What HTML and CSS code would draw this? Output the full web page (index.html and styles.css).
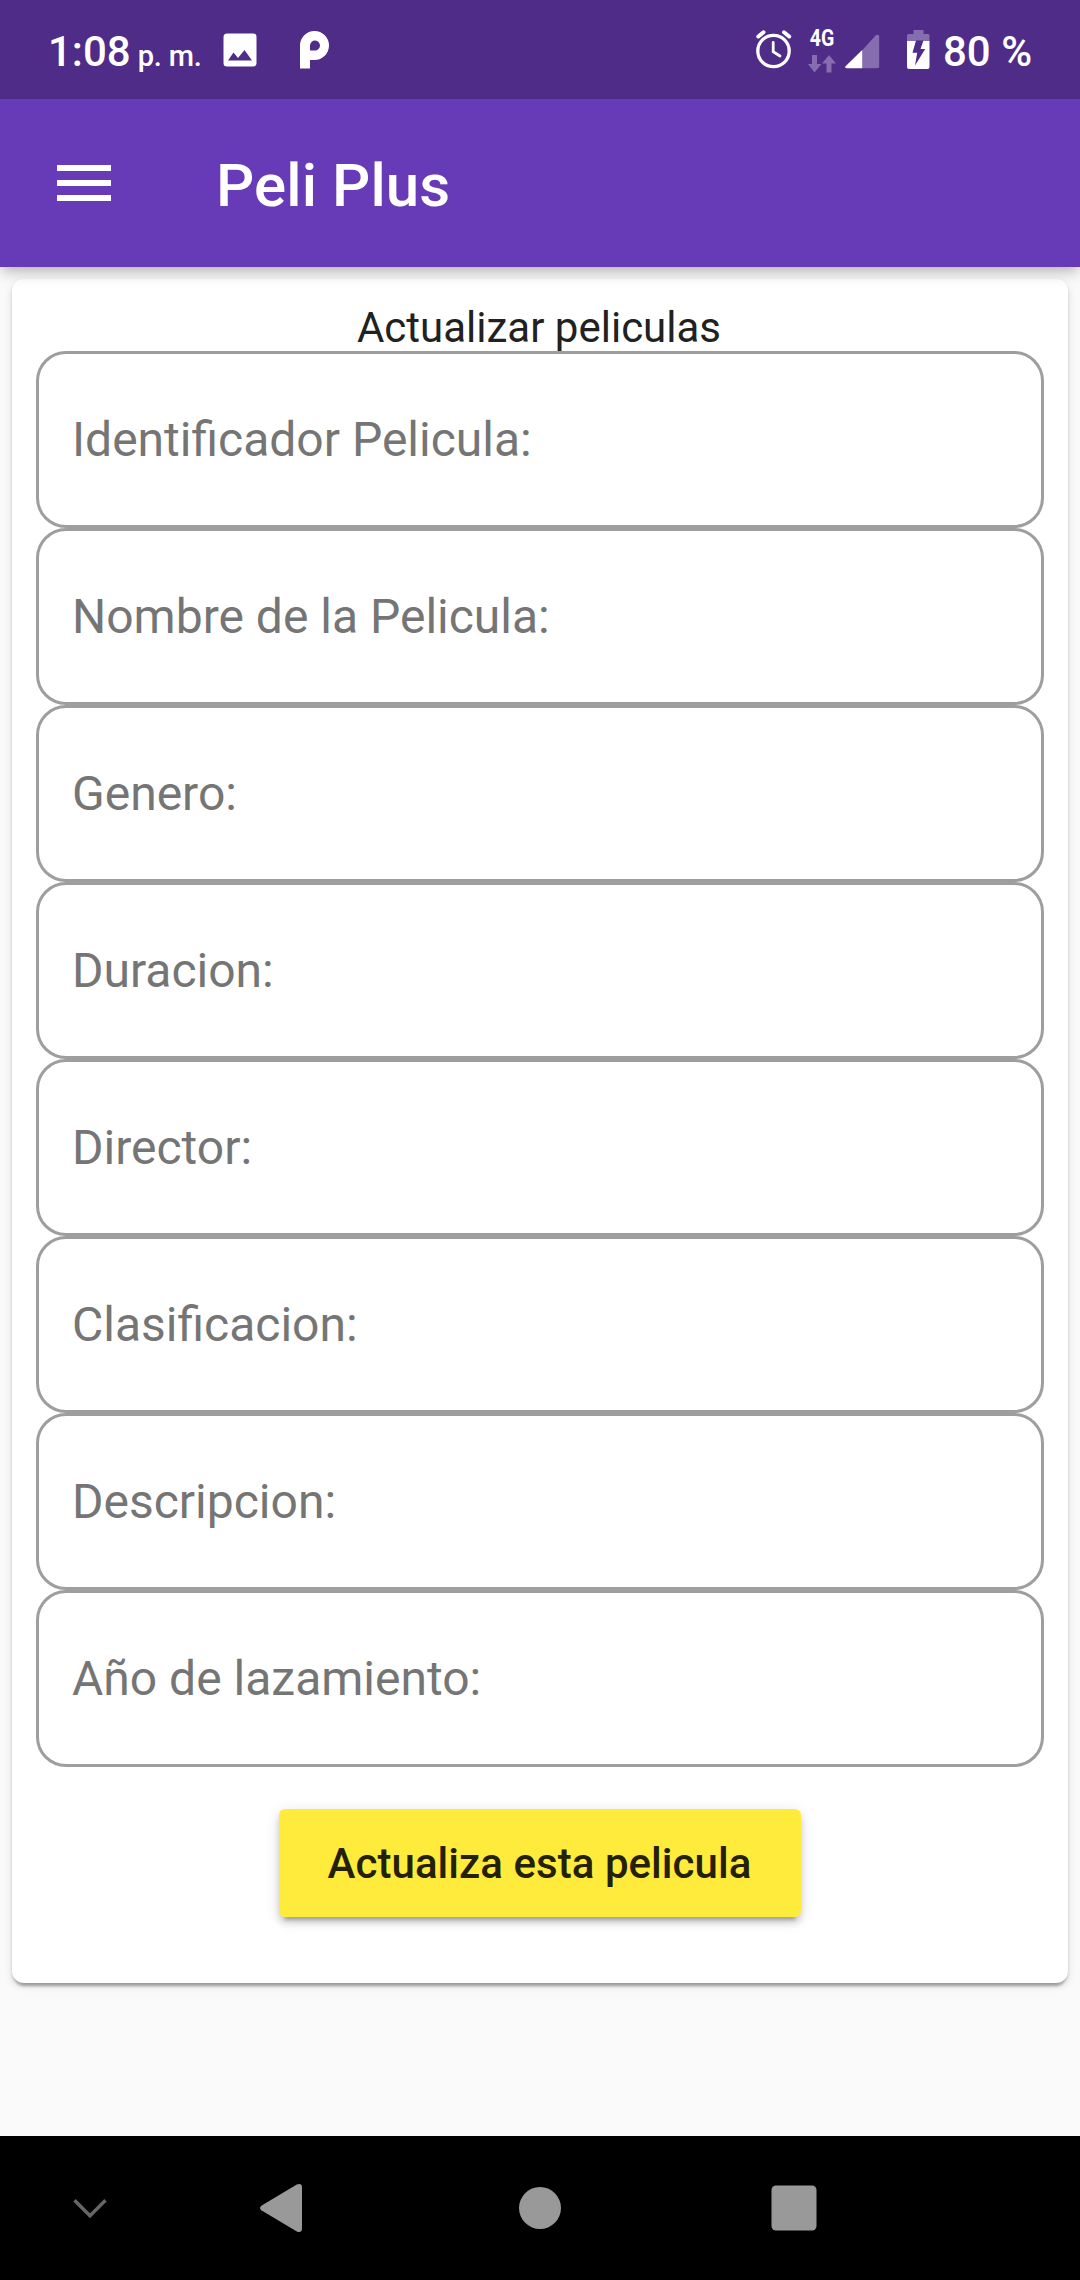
FILE: index.html
```html
<!DOCTYPE html>
<html lang="es">
<head>
<meta charset="utf-8">
<title>Peli Plus</title>
<link rel="stylesheet" href="styles.css">
</head>
<body>
<div class="screen">
  <div class="status-bar">
    <div class="status-group">
      <div class="clock"><span class="time">1:08</span><span class="meridiem">p. m.</span></div>
      <svg class="icon-picture" width="34" height="34" viewBox="0 0 34 34"><path fill="#fff" fill-rule="evenodd" d="M4 .5h26a3.500 3.500 0 0 1 3.500 3.500v26a3.500 3.500 0 0 1-3.500 3.500H4A3.500 3.500 0 0 1 .5 30V4A3.500 3.500 0 0 1 4 .5zM5 27.500h24L21.500 17l-6.500 8-4.500-5.500z"/></svg>
      <svg class="icon-p" width="30" height="38" viewBox="0 0 30 38"><path fill="#fff" fill-rule="evenodd" d="M0 37.500V14.500a14.500 14.500 0 1 1 14.500 14.500H10v8.500zM10 19.500h4.500a5 5 0 1 0-4.500-5z"/></svg>
    </div>
    <div class="status-group">
      <svg class="icon-alarm" width="38" height="40" viewBox="0 0 38 40"><g fill="none" stroke="#fff"><circle cx="18.500" cy="22" r="15.700" stroke-width="3.300"/><path stroke-width="2.800" stroke-linecap="round" d="M18.200 13.500v9.300l6.800 4.200"/><path stroke-width="4" stroke-linecap="round" d="M3.300 7.500 8.500 3.300M34.200 7.500 29 3.300"/></g></svg>
      <div class="network">
        <span class="network-type">4G</span>
        <svg width="28" height="18" viewBox="0 0 28 18"><path fill="#866daf" d="M4 0h5v9h4.500l-7 8.500L0 9h4zM18.500 17.500h5V8.500H28L21 0l-7 8.500h4.500z"/></svg>
      </div>
      <svg class="icon-signal" width="35" height="35" viewBox="0 0 35 35"><path fill="#866daf" d="M17 16.500 30.500 1.600C32 0 34.200.5 34.200 2.500V32.500q0 1.800-1.800 1.800H17z"/><path fill="#fff" d="M17.200 16v18.300H2Q-.5 34.300.5 32.300z"/></svg>
      <svg class="icon-battery" width="23" height="40" viewBox="0 0 23 40"><path fill="#866daf" d="M6.500 0h10v4H21q1.500 0 1.500 1.500V11H0V5.500Q0 4 1.500 4h5z"/><path fill="#fff" d="M0 11h22.500v26q0 2-2 2H2q-2 0-2-2z"/><path fill="#4e2c87" d="M9 10.500h7.500L13.500 19h4.700L8 35.500l2.200-12.800H5.500z"/></svg>
      <span class="battery-level">80 %</span>
    </div>
  </div>

  <header class="app-bar">
    <svg class="menu" width="54" height="36" viewBox="0 0 54 36"><path fill="#fff" d="M0 0h54v6H0zM0 15h54v6H0zM0 30h54v6H0z"/></svg>
    <h1 class="app-title">Peli Plus</h1>
  </header>

  <main class="content">
    <form class="card">
      <h2 class="card-title">Actualizar peliculas</h2>
      <label class="field">Identificador Pelicula:</label>
      <label class="field">Nombre de la Pelicula:</label>
      <label class="field">Genero:</label>
      <label class="field">Duracion:</label>
      <label class="field">Director:</label>
      <label class="field">Clasificacion:</label>
      <label class="field">Descripcion:</label>
      <label class="field">Año de lazamiento:</label>
      <button class="submit" type="button">Actualiza esta pelicula</button>
    </form>
  </main>

  <nav class="nav-bar">
    <svg class="nav-hide" width="34" height="22" viewBox="0 0 34 22"><path fill="none" stroke="#666" stroke-width="3.400" d="M1.500 3.200 17 18.800 32.500 3.200"/></svg>
    <svg class="nav-back" width="42" height="48" viewBox="0 0 42 48"><path fill="#999" d="M1.300 21.700 36.800.6Q42-1.200 42 3.500v41q0 4.700-5.200 2.900L1.300 26.300Q-1.200 24 1.300 21.700z"/></svg>
    <svg class="nav-home" width="42" height="42" viewBox="0 0 42 42"><circle cx="21" cy="21" r="21" fill="#999"/></svg>
    <svg class="nav-recents" width="46" height="46" viewBox="0 0 46 46"><rect x=".5" y=".5" width="45" height="45" rx="4.500" fill="#999"/></svg>
  </nav>
</div>
</body>
</html>
```
FILE: styles.css
```css
* { box-sizing: border-box; }
body { margin: 0; font-family: Roboto, sans-serif; }
svg { display: block; flex: none; }
h1, h2 { margin: 0; }

.screen {
  display: flex;
  flex-direction: column;
  width: 1080px;
  height: 2280px;
  background: #fafafa;
}

.status-bar {
  display: flex;
  justify-content: space-between;
  height: 99px;
  padding: 0 50px 0 48px;
  background: #4e2c87;
  color: #fff;
  font-weight: 500;
  position: relative;
  z-index: 2;
}
.status-group { display: flex; align-items: flex-start; }
.clock {
  display: flex;
  align-items: baseline;
  width: 175px;
  padding-top: 27px;
  white-space: nowrap;
}
.time { font-size: 42px; line-height: 49px; }
.meridiem { margin-left: 7px; font-size: 29px; letter-spacing: -.2px; }
.icon-picture { margin-top: 33px; }
.icon-p { margin: 31px 0 0 43px; }
.icon-alarm { margin-top: 29px; }
.network { width: 28px; margin: 28px 0 0 15px; }
.network-type {
  display: block;
  height: 27px;
  padding-left: 2px;
  font-size: 23px;
  font-weight: 700;
  line-height: 22px;
  transform: scaleX(.85);
  transform-origin: 0 0;
}
.icon-signal { margin: 34px 0 0 9px; }
.icon-battery { margin: 30px 0 0 27px; }
.battery-level {
  width: 87px;
  margin: 27px 0 0 13px;
  font-size: 42px;
  line-height: 49px;
  white-space: nowrap;
}

.app-bar {
  display: flex;
  align-items: center;
  gap: 105px;
  height: 168px;
  padding: 0 57px;
  background: #673ab7;
  color: #fff;
  position: relative;
  z-index: 1;
  box-shadow: 0 6px 12px -3px rgba(0,0,0,.2), 0 9px 15px rgba(0,0,0,.06), 0 3px 18px rgba(0,0,0,.06);
}
.app-title { padding-top: 5px; font-size: 60px; font-weight: 500; line-height: 70px; letter-spacing: .1px; }

.content { flex: 1; padding: 12px; }
.card {
  display: flex;
  flex-direction: column;
  height: 1704px;
  padding: 24px;
  border-radius: 12px;
  background: #fff;
  box-shadow: 0 6px 3px -3px rgba(0,0,0,.2), 0 3px 3px rgba(0,0,0,.14), 0 3px 9px rgba(0,0,0,.12);
}
.card-title {
  height: 48px;
  padding-right: 2px;
  color: #212121;
  font-size: 42px;
  font-weight: 400;
  line-height: 49px;
  text-align: center;
}
.field {
  display: flex;
  align-items: center;
  height: 177px;
  padding: 0 33px;
  border: 3px solid #9e9e9e;
  border-radius: 30px;
  color: #757575;
  font-size: 48px;
}
.submit {
  align-self: center;
  width: 522px;
  height: 108px;
  margin-top: 42px;
  padding: 0 1px 0 0;
  border: 0;
  border-radius: 6px;
  background: #ffeb3b;
  box-shadow: 0 9px 3px -6px rgba(0,0,0,.2), 0 6px 6px rgba(0,0,0,.14), 0 3px 15px rgba(0,0,0,.12);
  color: #242108;
  font: 500 42px/49px Roboto, sans-serif;
  letter-spacing: .05px;
  white-space: nowrap;
}

.nav-bar {
  display: flex;
  align-items: center;
  height: 144px;
  padding-left: 73px;
  background: #000;
}
.nav-back { margin-left: 153px; }
.nav-home { margin-left: 217px; }
.nav-recents { margin-left: 210px; }
```
